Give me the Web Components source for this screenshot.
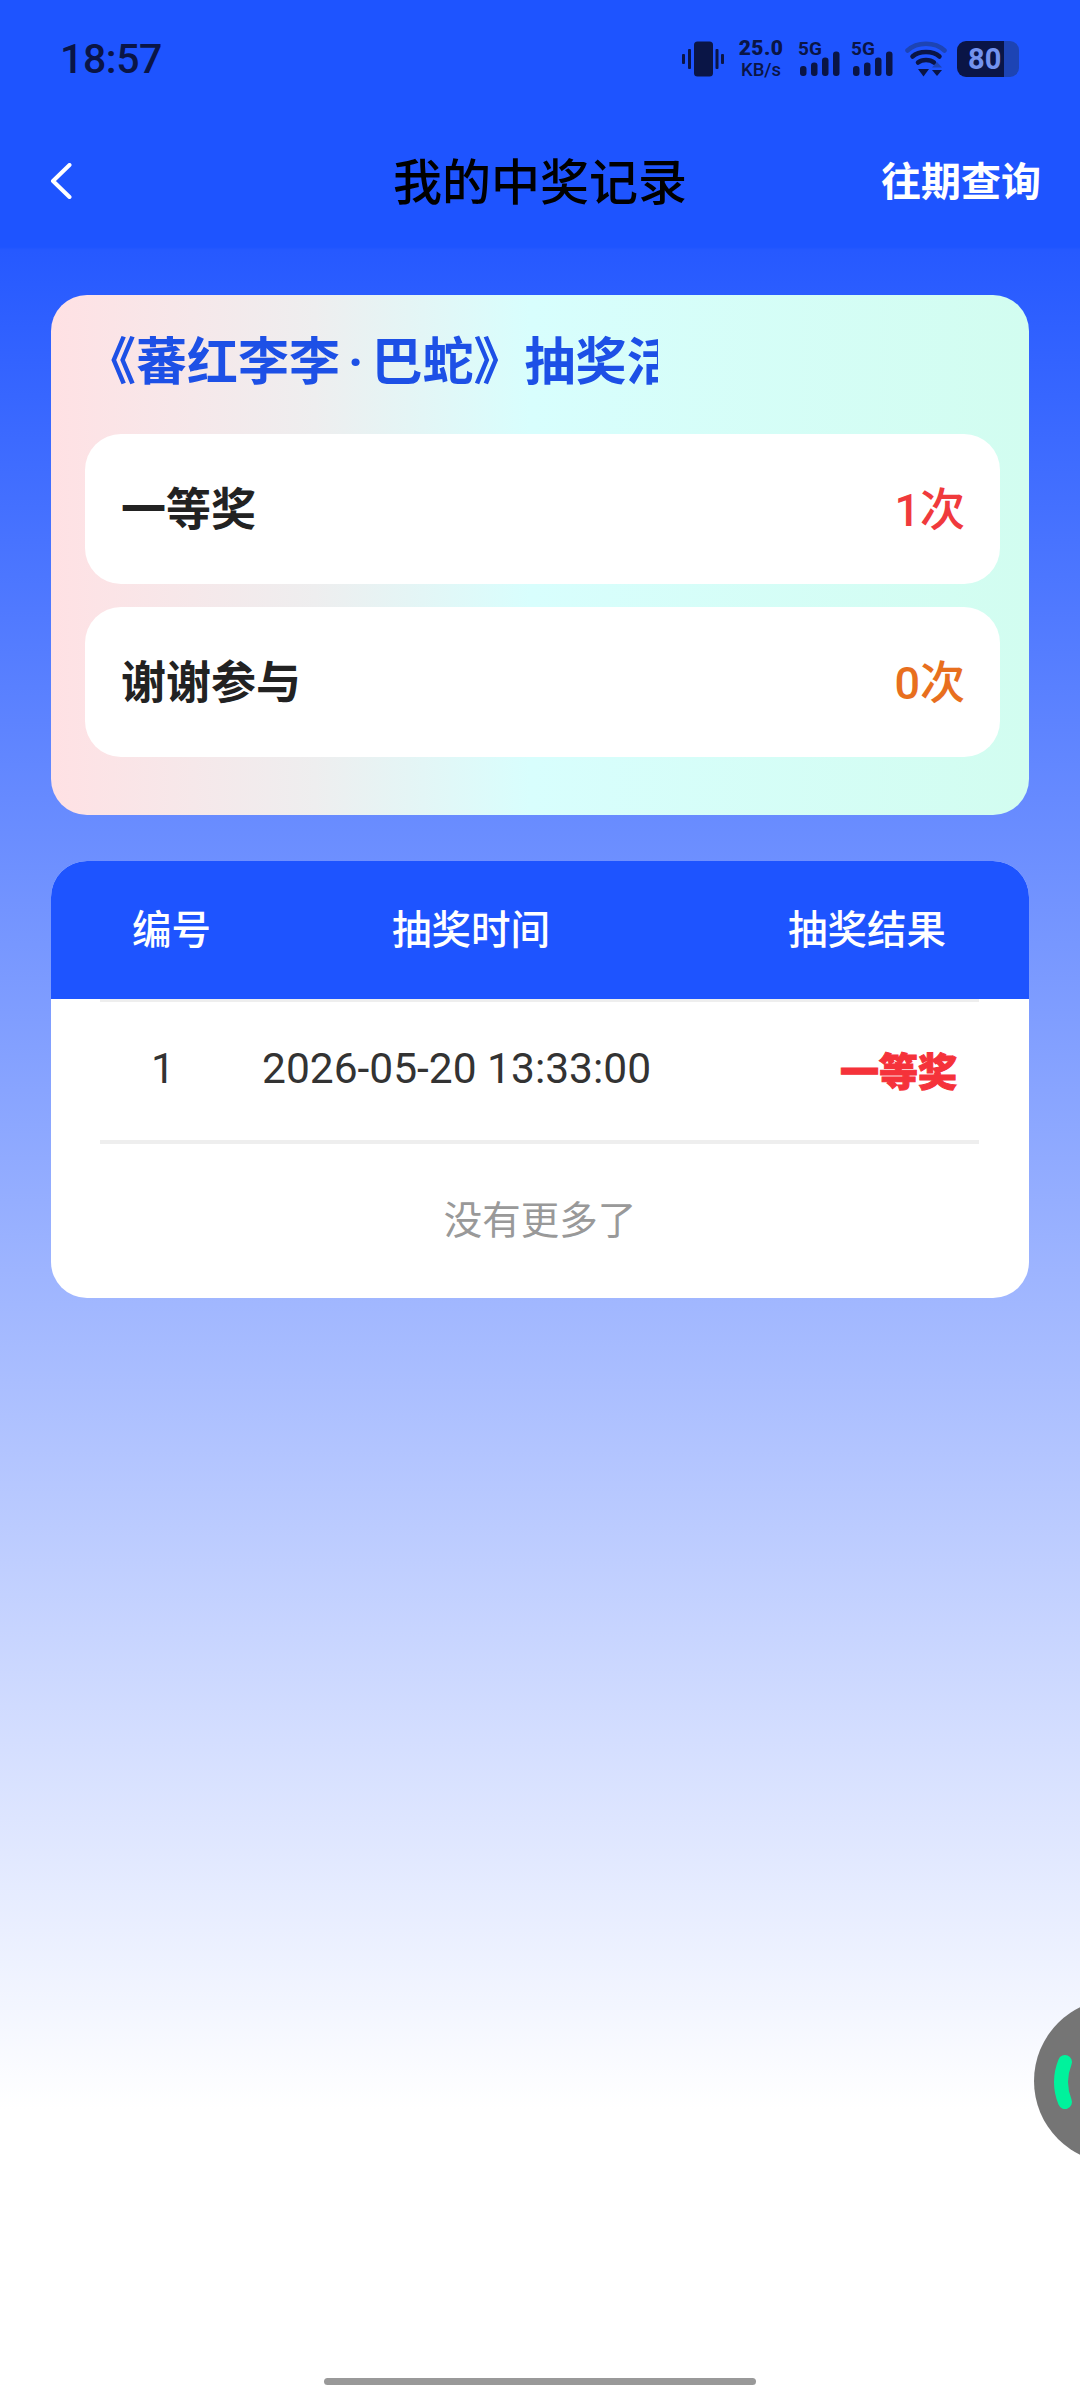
<!DOCTYPE html>
<html lang="zh">
<head>
<meta charset="utf-8">
<title>我的中奖记录</title>
<style>
  html, body {
    margin: 0;
    padding: 0;
  }

  body {
    width: 1080px;
    height: 2388px;
    overflow: hidden;
    position: relative;
    font-family: Roboto, "Noto Sans CJK SC", sans-serif;
    background: linear-gradient(to bottom, #1e54ff 0, #1e54ff 247px, #2659ff 250px, #ffffff 2110px);
  }
</style>
</head>
<body>

<status-bar time="18:57" speed="25.0" battery="80"></status-bar>
<nav-bar action="往期查询">我的中奖记录</nav-bar>

<prize-summary heading="《蕃红李李·巴蛇》抽奖活动">
  <prize-count label="一等奖" count="1次" color="#f03a3c"></prize-count>
  <prize-count label="谢谢参与" count="0次" color="#e86f1e"></prize-count>
</prize-summary>

<record-table footer="没有更多了">
  <record-row number="1" time="2026-05-20 13:33:00" result="一等奖"></record-row>
</record-table>

<float-ball></float-ball>
<home-bar></home-bar>

<script>
const signalIcon = `
<svg width="41" height="25" viewBox="0 0 41 25" fill="#0a1546">
  <rect x="0" y="15" width="6.5" height="10" rx="3"/>
  <rect x="11" y="11.5" width="6.5" height="13.5" rx="3"/>
  <rect x="22" y="6.5" width="6.5" height="18.5" rx="3"/>
  <rect x="33" y="0.5" width="6.5" height="24.5" rx="3"/>
</svg>`;

class StatusBar extends HTMLElement {
  constructor() {
    super();
    this.attachShadow({ mode: "open" });
  }

  connectedCallback() {
    const time = this.getAttribute("time");
    const speed = this.getAttribute("speed");
    const battery = this.getAttribute("battery");

    this.shadowRoot.innerHTML = `
    <style>
      :host {
        display: flex;
        align-items: center;
        height: 117px;
        padding: 0 61px 0 60px;
        color: #0a1546;
        font-family: Roboto, sans-serif;
      }
      .time {
        font-size: 41px;
        font-weight: 500;
        letter-spacing: -0.4px;
        margin-right: auto;
      }
      .icons {
        display: flex;
        align-items: center;
      }
      svg {
        display: block;
      }
      .speed {
        margin-left: 13px;
        width: 48px;
        display: flex;
        flex-direction: column;
        align-items: center;
        font-weight: 700;
        line-height: 1;
      }
      .speed b {
        font-size: 21px;
        letter-spacing: 0.4px;
      }
      .speed span {
        font-size: 18.5px;
        font-weight: 500;
        margin-top: 2px;
      }
      .signal {
        display: flex;
        flex-direction: column;
        width: 41px;
        margin-left: 15px;
      }
      .signal + .signal {
        margin-left: 12px;
      }
      .signal span {
        font-size: 19px;
        font-weight: 700;
        line-height: 13px;
        margin: 0 0 -4px -2px;
      }
      .wifi {
        margin-left: 11px;
      }
      .battery {
        margin-left: 10px;
        width: 62px;
        height: 36px;
        border-radius: 9px;
        background: linear-gradient(to right, #0a1546 76%, #1d44b4 76%);
        color: #7393ee;
        font-size: 29px;
        font-weight: 700;
        line-height: 36px;
        padding-left: 11px;
        box-sizing: border-box;
      }
    </style>
    <span class="time">${time}</span>
    <div class="icons">
      <svg width="42" height="36" viewBox="0 0 42 36" fill="#0a1546">
        <rect x="12" y="0.5" width="19" height="35" rx="3.5"/>
        <rect x="0" y="13" width="3" height="10" rx="1"/>
        <rect x="6" y="8" width="3" height="20" rx="1"/>
        <rect x="33.5" y="8" width="3" height="20" rx="1"/>
        <rect x="39" y="13" width="3" height="10" rx="1"/>
      </svg>
      <div class="speed"><b>${speed}</b><span>KB/s</span></div>
      <div class="signal"><span>5G</span>${signalIcon}</div>
      <div class="signal"><span>5G</span>${signalIcon}</div>
      <svg class="wifi" width="42" height="36" viewBox="0 0 42 36" fill="none" stroke-linecap="round">
        <path d="M2.5 9.5C12 0.5 30 0.5 39.5 9.5" stroke="#1d44b4" stroke-width="4.5"/>
        <path d="M7.5 15.5C14 9.5 28 9.5 34.5 15.5" stroke="#0a1546" stroke-width="4.5"/>
        <path d="M13 21.5C17 18 25 18 29 21.5" stroke="#0a1546" stroke-width="4.5"/>
        <path d="M13 28H24L18.5 35.5Z" fill="#0a1546"/>
        <path d="M32 21L37 26.5H27Z" fill="#1d44b4"/>
        <path d="M27 29H37L32 35Z" fill="#0a1546"/>
      </svg>
      <div class="battery">${battery}</div>
    </div>
    `;
  }
}

class NavBar extends HTMLElement {
  constructor() {
    super();
    this.attachShadow({ mode: "open" });
  }

  connectedCallback() {
    this.shadowRoot.innerHTML = `
    <style>
      :host {
        display: grid;
        grid-template-columns: 1fr auto 1fr;
        align-items: center;
        height: 130px;
        padding: 0 39px 0 50px;
        font-family: Roboto, "Noto Sans CJK SC", sans-serif;
      }
      svg {
        display: block;
        margin-top: -2px;
      }
      .title {
        margin-left: -11px;
        padding-bottom: 8px;
        font-size: 49px;
        font-weight: 500;
        color: #000;
      }
      .action {
        justify-self: end;
        padding-bottom: 6px;
        font-size: 40px;
        font-weight: 700;
        color: #fff;
      }
    </style>
    <svg width="22" height="36" viewBox="0 0 22 36" fill="none" stroke="#fff" stroke-width="4" stroke-linecap="round" stroke-linejoin="round">
      <path d="M19.5 2L3 18L19.5 34"/>
    </svg>
    <span class="title"><slot></slot></span>
    <span class="action">${this.getAttribute("action")}</span>
    `;
  }
}

class PrizeSummary extends HTMLElement {
  constructor() {
    super();
    this.attachShadow({ mode: "open" });
  }

  connectedCallback() {
    const [before, after] = this.getAttribute("heading").split("·");

    this.shadowRoot.innerHTML = `
    <style>
      :host {
        display: block;
        margin: 48px 51px 0;
        padding: 0 29px 58px 34px;
        border-radius: 36px;
        background: linear-gradient(to right, #ffe1e4 0%, #eeeeef 27%, #d8fefd 49%, #d2fdf0 100%);
      }
      .heading {
        width: 573px;
        height: 139px;
        line-height: 136px;
        overflow: hidden;
        white-space: nowrap;
        font-size: 51px;
        font-weight: 700;
        color: #1d50e6;
      }
      .dot {
        margin: 0 8px;
      }
      .rows {
        display: flex;
        flex-direction: column;
        gap: 23px;
      }
    </style>
    <div class="heading">${before}<span class="dot">·</span>${after}</div>
    <div class="rows"><slot></slot></div>
    `;
  }
}

class PrizeCount extends HTMLElement {
  constructor() {
    super();
    this.attachShadow({ mode: "open" });
  }

  connectedCallback() {
    this.shadowRoot.innerHTML = `
    <style>
      :host {
        display: flex;
        align-items: center;
        justify-content: space-between;
        height: 150px;
        padding: 0 35px 5px 36px;
        box-sizing: border-box;
        border-radius: 36px;
        background: #fff;
        font-size: 45px;
        font-weight: 500;
      }
      .label {
        color: #222;
        font-weight: 700;
      }
      .count {
        color: ${this.getAttribute("color")};
      }
    </style>
    <span class="label">${this.getAttribute("label")}</span>
    <span class="count">${this.getAttribute("count")}</span>
    `;
  }
}

class RecordTable extends HTMLElement {
  constructor() {
    super();
    this.attachShadow({ mode: "open" });
  }

  connectedCallback() {
    this.shadowRoot.innerHTML = `
    <style>
      :host {
        display: block;
        margin: 46px 51px 0;
        border-radius: 36px;
        overflow: hidden;
        background: #fff;
      }
      .head {
        display: flex;
        align-items: center;
        height: 138px;
        box-sizing: border-box;
        padding: 0 0 8px 81px;
        background: #1e54ff;
        color: #fff;
        font-size: 39.5px;
        font-weight: 500;
      }
      .head span:nth-child(2) {
        margin-left: 181px;
      }
      .head span:nth-child(3) {
        margin-left: 238px;
      }
      .footer {
        height: 154px;
        line-height: 154px;
        text-align: center;
        font-size: 38.5px;
        color: #999;
      }
    </style>
    <div class="head"><span>编号</span><span>抽奖时间</span><span>抽奖结果</span></div>
    <slot></slot>
    <div class="footer">${this.getAttribute("footer")}</div>
    `;
  }
}

class RecordRow extends HTMLElement {
  constructor() {
    super();
    this.attachShadow({ mode: "open" });
  }

  connectedCallback() {
    this.shadowRoot.innerHTML = `
    <style>
      :host {
        display: block;
        margin: 0 50px 0 49px;
        height: 145px;
        box-sizing: border-box;
        border-top: 3px solid #eee;
        border-bottom: 4px solid #eee;
      }
      .cells {
        display: flex;
        align-items: center;
        height: 132px;
        font-size: 42.5px;
        color: #333;
      }
      .number {
        width: 40px;
        margin-left: 43px;
        text-align: center;
      }
      .time {
        margin-left: 79px;
      }
      .result {
        margin-left: auto;
        margin-right: 22px;
        padding-top: 1px;
        font-size: 39px;
        font-weight: 900;
        color: #f5323a;
        -webkit-text-stroke: 1px #f5323a;
      }
    </style>
    <div class="cells">
      <span class="number">${this.getAttribute("number")}</span>
      <span class="time">${this.getAttribute("time")}</span>
      <span class="result">${this.getAttribute("result")}</span>
    </div>
    `;
  }
}

class FloatBall extends HTMLElement {
  constructor() {
    super();
    this.attachShadow({ mode: "open" });
  }

  connectedCallback() {
    this.shadowRoot.innerHTML = `
    <style>
      :host {
        display: block;
        position: absolute;
        right: 0;
        top: 1999px;
        width: 46px;
        height: 164px;
      }
      svg {
        display: block;
      }
    </style>
    <svg width="46" height="164" viewBox="0 0 46 164">
      <circle cx="82" cy="82" r="82" fill="#757575"/>
      <path d="M31 63Q23 83 31 103" fill="none" stroke="#00f29c" stroke-width="14" stroke-linecap="round"/>
    </svg>
    `;
  }
}

class HomeBar extends HTMLElement {
  constructor() {
    super();
    this.attachShadow({ mode: "open" });
  }

  connectedCallback() {
    this.shadowRoot.innerHTML = `
    <style>
      :host {
        display: block;
        position: absolute;
        left: 324px;
        top: 2378px;
        width: 432px;
        height: 7px;
        border-radius: 4px;
        background: #999;
      }
    </style>
    `;
  }
}

window.customElements.define("status-bar", StatusBar);
window.customElements.define("nav-bar", NavBar);
window.customElements.define("prize-summary", PrizeSummary);
window.customElements.define("prize-count", PrizeCount);
window.customElements.define("record-table", RecordTable);
window.customElements.define("record-row", RecordRow);
window.customElements.define("float-ball", FloatBall);
window.customElements.define("home-bar", HomeBar);
</script>
</body>
</html>
